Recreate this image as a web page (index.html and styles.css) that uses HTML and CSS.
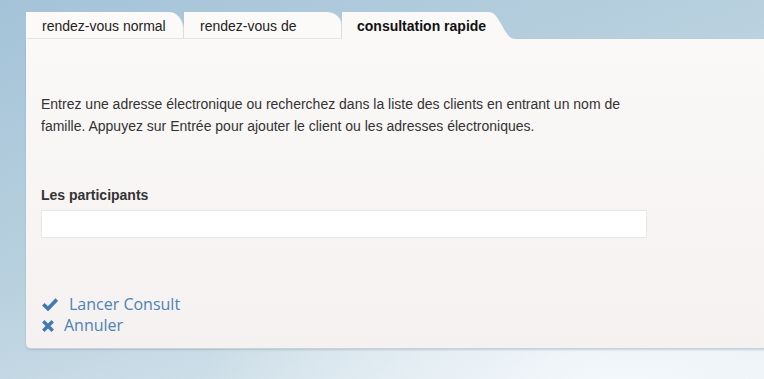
FILE: index.html
```html
<!DOCTYPE html>
<html lang="fr">
<head>
<meta charset="utf-8">
<title>Consultation rapide</title>
<link rel="stylesheet" href="styles.css">
</head>
<body>
<div class="wrap">
  <div class="tabs">
    <div class="tab tab-normal">rendez-vous normal</div>
    <div class="tab tab-de">rendez-vous de</div>
    <div class="tab tab-active">consultation rapide</div>
  </div>
  <div class="panel">
    <p class="intro">Entrez une adresse électronique ou recherchez dans la liste des clients en entrant un nom de famille. Appuyez sur Entrée pour ajouter le client ou les adresses électroniques.</p>
    <label class="field-label" for="participants">Les participants</label>
    <input class="field" id="participants" type="text">
    <div class="actions">
      <a class="action action-launch" href="#">
        <svg class="ico ico-check" viewBox="0 0 16 13" width="16" height="13"><polyline points="1.3,6.2 6,10.8 14.8,1.6" fill="none" stroke="currentColor" stroke-width="3.6" stroke-linejoin="miter" stroke-linecap="butt"/></svg>
        <span>Lancer Consult</span>
      </a>
      <a class="action action-cancel" href="#">
        <svg class="ico ico-x" viewBox="0 0 12 12" width="12" height="12"><path d="M1.3 1.3 L10.7 10.7 M10.7 1.3 L1.3 10.7" fill="none" stroke="currentColor" stroke-width="3.4" stroke-linecap="butt"/></svg>
        <span>Annuler</span>
      </a>
    </div>
  </div>
</div>
</body>
</html>
```

FILE: styles.css
```css
html, body {
  margin: 0;
  padding: 0;
  height: 100%;
}
body {
  overflow: hidden;
  font-family: "Liberation Sans", Arial, sans-serif;
  color: #333;
  background:
    radial-gradient(ellipse 420px 200px at 620px 390px, rgba(245,249,252,0.95), rgba(245,249,252,0) 100%),
    linear-gradient(160deg, #a4c3d8 0%, #b9d1df 45%, #d6e4ec 80%, #e6eef3 100%);
}
.wrap {
  padding: 12px 0 0 26px;
  margin-right: -20px;
}
.tabs {
  display: flex;
  align-items: flex-end;
  height: 27px;
}
.tab {
  box-sizing: border-box;
  height: 27px;
  font-size: 14px;
  line-height: 27px;
  color: #222;
  background: #fbfaf9;
  white-space: nowrap;
  padding-top: 1px;
}
.tab-normal {
  width: 158px;
  padding-left: 16px;
  border-right: 1px solid #dcdcdc;
  border-bottom: 1px solid #e6e6e6;
  border-top-right-radius: 15px 18px;
}
.tab-de {
  width: 158px;
  padding-left: 16px;
  border-right: 1px solid #dcdcdc;
  border-bottom: 1px solid #e6e6e6;
  border-top-right-radius: 15px 13px;
}
.tab-active {
  width: 173px;
  padding-left: 15px;
  font-weight: bold;
  color: #111;
  background: #faf9f8;
  clip-path: path("M0 0 H147 C158 0, 162 27, 173 27 H0 Z");
}
.panel {
  background: linear-gradient(#faf9f8, #f5f1f0);
  border-bottom: 1px solid #c9d2d9;
  border-bottom-left-radius: 5px;
  box-shadow: 0 1px 2px rgba(80, 110, 130, 0.25);
  height: 310px;
  padding: 54px 0 0 15px;
  box-sizing: border-box;
}
.intro {
  margin: 0;
  width: 606px;
  font-size: 14px;
  line-height: 22px;
  color: #333;
}
.field-label {
  display: block;
  margin-top: 49px;
  font-size: 14px;
  font-weight: bold;
  line-height: 18px;
  color: #333;
}
.field {
  display: block;
  box-sizing: border-box;
  margin: 6px 0 0 0;
  width: 606px;
  height: 28px;
  border: 1px solid #e7e7e7;
  background: #fff;
  padding: 0 6px;
  outline: none;
}
.actions {
  margin-top: 56px;
  display: flex;
  flex-direction: column;
  font-family: "Open Sans", sans-serif;
  font-size: 16px;
  line-height: 21px;
}
.action {
  display: flex;
  align-items: center;
  text-decoration: none;
  color: #4a84b8;
}
.ico {
  display: block;
  color: #3d7ab6;
  flex: none;
}
.ico-check {
  margin-left: 1px;
  margin-right: 11px;
}
.ico-x {
  margin-left: 1px;
  margin-right: 10px;
}
```
